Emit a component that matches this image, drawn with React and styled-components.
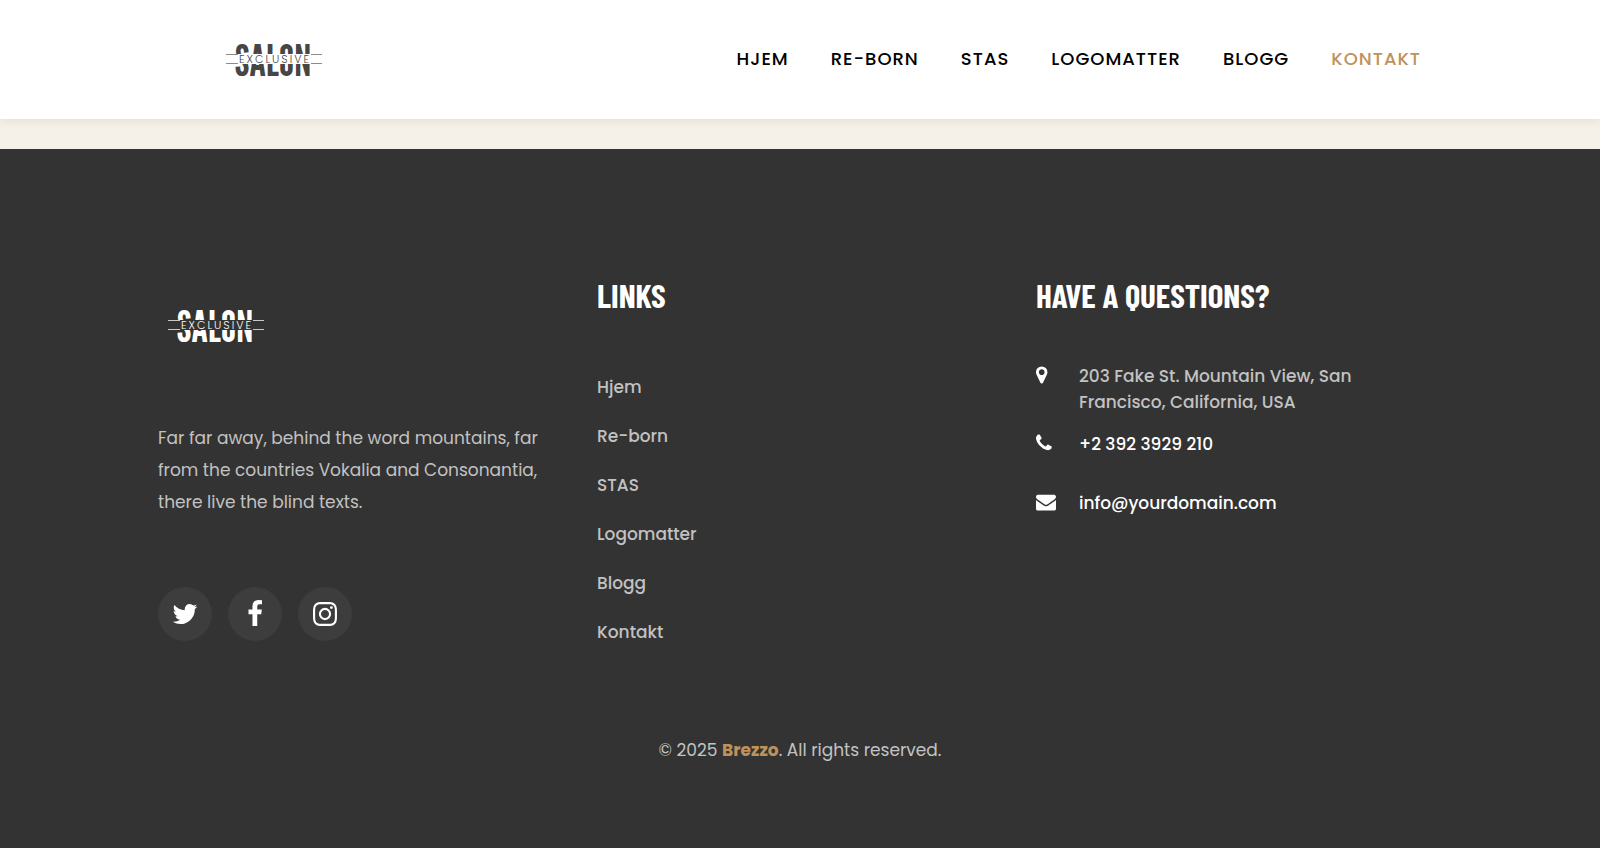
import React from "react";
import styled, { createGlobalStyle } from "styled-components";

const menu = ["Hjem", "Re-born", "STAS", "Logomatter", "Blogg", "Kontakt"];

const socials = [
  {
    name: "Twitter",
    path: "M1684 408q-67 98-162 167 1 14 1 42 0 130-38 259.5t-115.5 248.5-184.5 210.5-258 146-323 54.5q-271 0-496-145 35 4 78 4 225 0 401-138-105-2-188-64.5t-114-159.5q33 5 61 5 43 0 85-11-112-23-185.5-111.5t-73.5-205.5v-4q68 38 146 41-66-44-105-115t-39-154q0-88 44-163 121 149 294.5 238.5t371.5 99.5q-8-38-8-74 0-134 94.5-228.5t228.5-94.5q140 0 236 102 109-21 205-78-37 115-142 178 93-10 186-50z"
  },
  {
    name: "Facebook",
    path: "M1343 12v264h-157q-86 0-116 36t-30 108v189h293l-39 296h-254v759h-306v-759h-255v-296h255v-218q0-186 104-288.5t277-102.5q147 0 228 12z"
  },
  {
    name: "Instagram",
    path: "M1152 896q0-106-75-181t-181-75-181 75-75 181 75 181 181 75 181-75 75-181zm138 0q0 164-115 279t-279 115-279-115-115-279 115-279 279-115 279 115 115 279zm108-410q0 38-27 65t-65 27-65-27-27-65 27-65 65-27 65 27 27 65zm-502-220q-7 0-76.5-.5t-105.5 0-96.5 3-103 10-71.5 18.5q-50 20-88 58t-58 88q-11 29-18.5 71.5t-10 103-3 96.5 0 105.5.5 76.5-.5 76.5 0 105.5 3 96.5 10 103 18.5 71.5q20 50 58 88t88 58q29 11 71.5 18.5t103 10 96.5 3 105.5 0 76.5-.5 76.5.5 105.5 0 96.5-3 103-10 71.5-18.5q50-20 88-58t58-88q11-29 18.5-71.5t10-103 3-96.5 0-105.5-.5-76.5.5-76.5 0-105.5-3-96.5-10-103-18.5-71.5q-20-50-58-88t-88-58q-29-11-71.5-18.5t-103-10-96.5-3-105.5 0-76.5.5zm768 630q0 229-5 317-10 208-124 322t-322 124q-88 5-317 5t-317-5q-208-10-322-124t-124-322q-5-88-5-317t5-317q10-208 124-322t322-124q88-5 317-5t317 5q208 10 322 124t124 322q5 88 5 317z"
  }
];

const MARKER =
  "M1152 640q0-106-75-181t-181-75-181 75-75 181 75 181 181 75 181-75 75-181zm256 0q0 109-33 179l-364 774q-16 33-47.5 52t-67.5 19-67.5-19-46.5-52l-365-774q-33-70-33-179 0-212 150-362t362-150 362 150 150 362z";
const PHONE =
  "M1600 1240q0 27-10 70.5t-21 68.5q-21 50-122 106-94 51-186 51-27 0-53-3.5t-57.5-12.5-47-14.5-55.5-20.5-49-18q-98-35-175-83-127-79-264-216t-216-264q-48-77-83-175-3-9-18-49t-20.5-55.5-14.5-47-12.5-57.5-3.5-53q0-92 51-186 56-101 106-122 25-11 68.5-21t70.5-10q14 0 21 3 18 6 53 76 11 19 30 54t35 63.5 31 53.5q3 4 17.5 25t21.5 35.5 7 28.5q0 20-28.5 50t-62 55-62 53-28.5 46q0 9 5 22.5t8.5 20.5 14 24 11.5 19q76 137 174 235t235 174q2 1 19 11.5t24 14 20.5 8.5 22.5 5q18 0 46-28.5t53-62 55-62 50-28.5q14 0 28.5 7t35.5 21.5 25 17.5q25 15 53.5 31t63.5 35 54 30q70 35 76 53 3 7 3 21z";
const ENVELOPE =
  "M1792 710v794q0 66-47 113t-113 47h-1472q-66 0-113-47t-47-113v-794q44 49 101 87 362 246 497 345 57 42 92.5 65.5t94.5 48 110 24.5h2q51 0 110-24.5t94.5-48 92.5-65.5q170-123 498-345 57-39 100-87zm0-294q0 79-49 151t-122 123q-376 261-468 325-10 7-42.5 31t-54 38.5-52 32.5-57.5 27-50 9h-2q-23 0-50-9t-57.5-27-52-32.5-54-38.5-42.5-31q-91-64-262-182.5t-205-142.5q-62-42-117-115.5t-55-136.5q0-78 41.5-130t118.5-52h1472q65 0 112.5 47t47.5 113z";

// band is the background colour, it cuts the big word in two
const Logo = ({ color, thin, band }) => (
  <LogoImage viewBox="0 0 116 98" role="img" aria-label="Salon Exclusive">
    <LogoWord x="57" y="66" fill={color}>SALON</LogoWord>
    <rect x="10" y="44" width="96" height="10" fill={band} />
    <path d="M10 44.5h12M95 44.5h11M10 53.5h12M95 53.5h11" stroke={thin} strokeWidth="1" />
    <LogoSub x="59" y="53" fill={color}>EXCLUSIVE</LogoSub>
  </LogoImage>
);

const App = () => (
  <Page>
    <GlobalStyle />
    <Header>
      <HeaderInner>
        <LogoLink href="#">
          <Logo color="#474644" thin="#8c8b89" band="#ffffff" />
        </LogoLink>
        <Nav>
          {menu.map(item => (
            <NavLink key={item} href="#" $active={item === "Kontakt"}>
              {item}
            </NavLink>
          ))}
        </Nav>
      </HeaderInner>
    </Header>
    <Footer>
      <Columns>
        <div>
          <Logo color="#ffffff" thin="#c8c8c8" band="#333333" />
          <About>
            Far far away, behind the word mountains, far from the countries
            Vokalia and Consonantia, there live the blind texts.
          </About>
          <Socials>
            {socials.map(({ name, path }) => (
              <li key={name}>
                <SocialLink href="#" aria-label={name}>
                  <svg viewBox="0 0 1792 1792" width="28" height="28">
                    <path d={path} fill="currentColor" />
                  </svg>
                </SocialLink>
              </li>
            ))}
          </Socials>
        </div>
        <div>
          <Title>Links</Title>
          <List>
            {menu.map(item => (
              <LinkItem key={item}>
                <FooterLink href="#">{item}</FooterLink>
              </LinkItem>
            ))}
          </List>
        </div>
        <div>
          <Title>Have a Questions?</Title>
          <List>
            <ContactItem $gap={16}>
              <ContactIcon viewBox="384 0 1792 1792">
                <path d={MARKER} />
              </ContactIcon>
              <Address>203 Fake St. Mountain View, San Francisco, California, USA</Address>
            </ContactItem>
            <ContactItem $gap={33}>
              <ContactIcon viewBox="192 0 1792 1792">
                <path d={PHONE} />
              </ContactIcon>
              <ContactLink href="tel:+23923929210">+2 392 3929 210</ContactLink>
            </ContactItem>
            <ContactItem $gap={0}>
              <ContactIcon viewBox="0 0 1792 1792">
                <path d={ENVELOPE} />
              </ContactIcon>
              <ContactLink href="mailto:info@yourdomain.com">info@yourdomain.com</ContactLink>
            </ContactItem>
          </List>
        </div>
      </Columns>
      <Copyright>
        © 2025 <Brand href="#">Brezzo</Brand>. All rights reserved.
      </Copyright>
    </Footer>
  </Page>
);

export default App;

const GlobalStyle = createGlobalStyle`
  * {
    box-sizing: border-box;
  }
  body {
    margin: 0;
    background-color: #f5f1e8;
    font-family: Poppins, Inter, "Liberation Sans", sans-serif;
    font-size: 17px;
  }
  a {
    text-decoration: none;
  }
`;

const Page = styled.div`
  display: flex;
  flex-direction: column;
  min-height: 100vh;
`;

const Header = styled.header`
  background-color: white;
  padding: 10px 24px 11px;
  box-shadow: 0 0 11px rgba(0, 0, 0, 0.1);
`;

const HeaderInner = styled.div`
  display: flex;
  justify-content: space-between;
  align-items: center;
  max-width: 1284px;
  margin: 0 auto;
`;

const LogoLink = styled.a`
  margin-left: 58px;
`;

const LogoImage = styled.svg`
  display: block;
  width: 116px;
  height: 98px;
`;

const LogoWord = styled.text`
  font-family: "League Gothic", "Bebas Neue", "Barlow Condensed", "Liberation Sans", sans-serif;
  font-size: 43px;
  font-weight: 400;
  text-anchor: middle;
`;

const LogoSub = styled.text`
  font-family: Poppins, Lato, sans-serif;
  font-size: 11px;
  font-weight: 300;
  letter-spacing: 2px;
  text-anchor: middle;
`;

const Nav = styled.nav`
  display: flex;
`;

const NavLink = styled.a`
  padding: 21px;
  font-size: 18px;
  line-height: 26px;
  font-weight: 500;
  letter-spacing: 1px;
  text-transform: uppercase;
  color: ${props => (props.$active ? "#bf925b" : "black")};
`;

const Footer = styled.footer`
  flex: 1;
  margin-top: 30px;
  padding: 127px 24px 82px;
  background-color: #333333;
  color: #c2c2c2;
`;

const Columns = styled.div`
  display: grid;
  grid-template-columns: repeat(3, 1fr);
  gap: 33px;
  max-width: 1284px;
  margin: 0 auto;
`;

const Title = styled.h2`
  margin: 0 0 49px;
  font-family: "Barlow Condensed", "Liberation Sans", sans-serif;
  font-size: 33px;
  line-height: 38px;
  font-weight: 700;
  text-transform: uppercase;
  color: white;
`;

const About = styled.p`
  margin: 48px 0 69px;
  line-height: 32px;
`;

const List = styled.ul`
  list-style-type: none;
  margin: 0;
  padding: 0;
`;

const Socials = styled(List)`
  display: flex;
  gap: 16px;
`;

const SocialLink = styled.a`
  display: flex;
  justify-content: center;
  align-items: center;
  width: 54px;
  height: 54px;
  border-radius: 50%;
  background-color: #3d3d3d;
  color: white;
`;

const LinkItem = styled.li`
  line-height: 49px;
`;

const FooterLink = styled.a`
  font-weight: 500;
  color: #c2c2c2;
`;

const ContactItem = styled.li`
  display: flex;
  gap: 23px;
  margin-bottom: ${props => props.$gap}px;
  line-height: 26px;
  font-weight: 500;
`;

const ContactIcon = styled.svg`
  flex: none;
  width: 20px;
  height: 20px;
  margin-top: 2px;
  fill: white;
`;

const Address = styled.span`
  max-width: 300px;
`;

const ContactLink = styled.a`
  color: white;
`;

const Copyright = styled.p`
  margin: 77px 0 0;
  line-height: 32px;
  text-align: center;
`;

const Brand = styled.a`
  font-weight: 700;
  color: #bf925b;
`;
